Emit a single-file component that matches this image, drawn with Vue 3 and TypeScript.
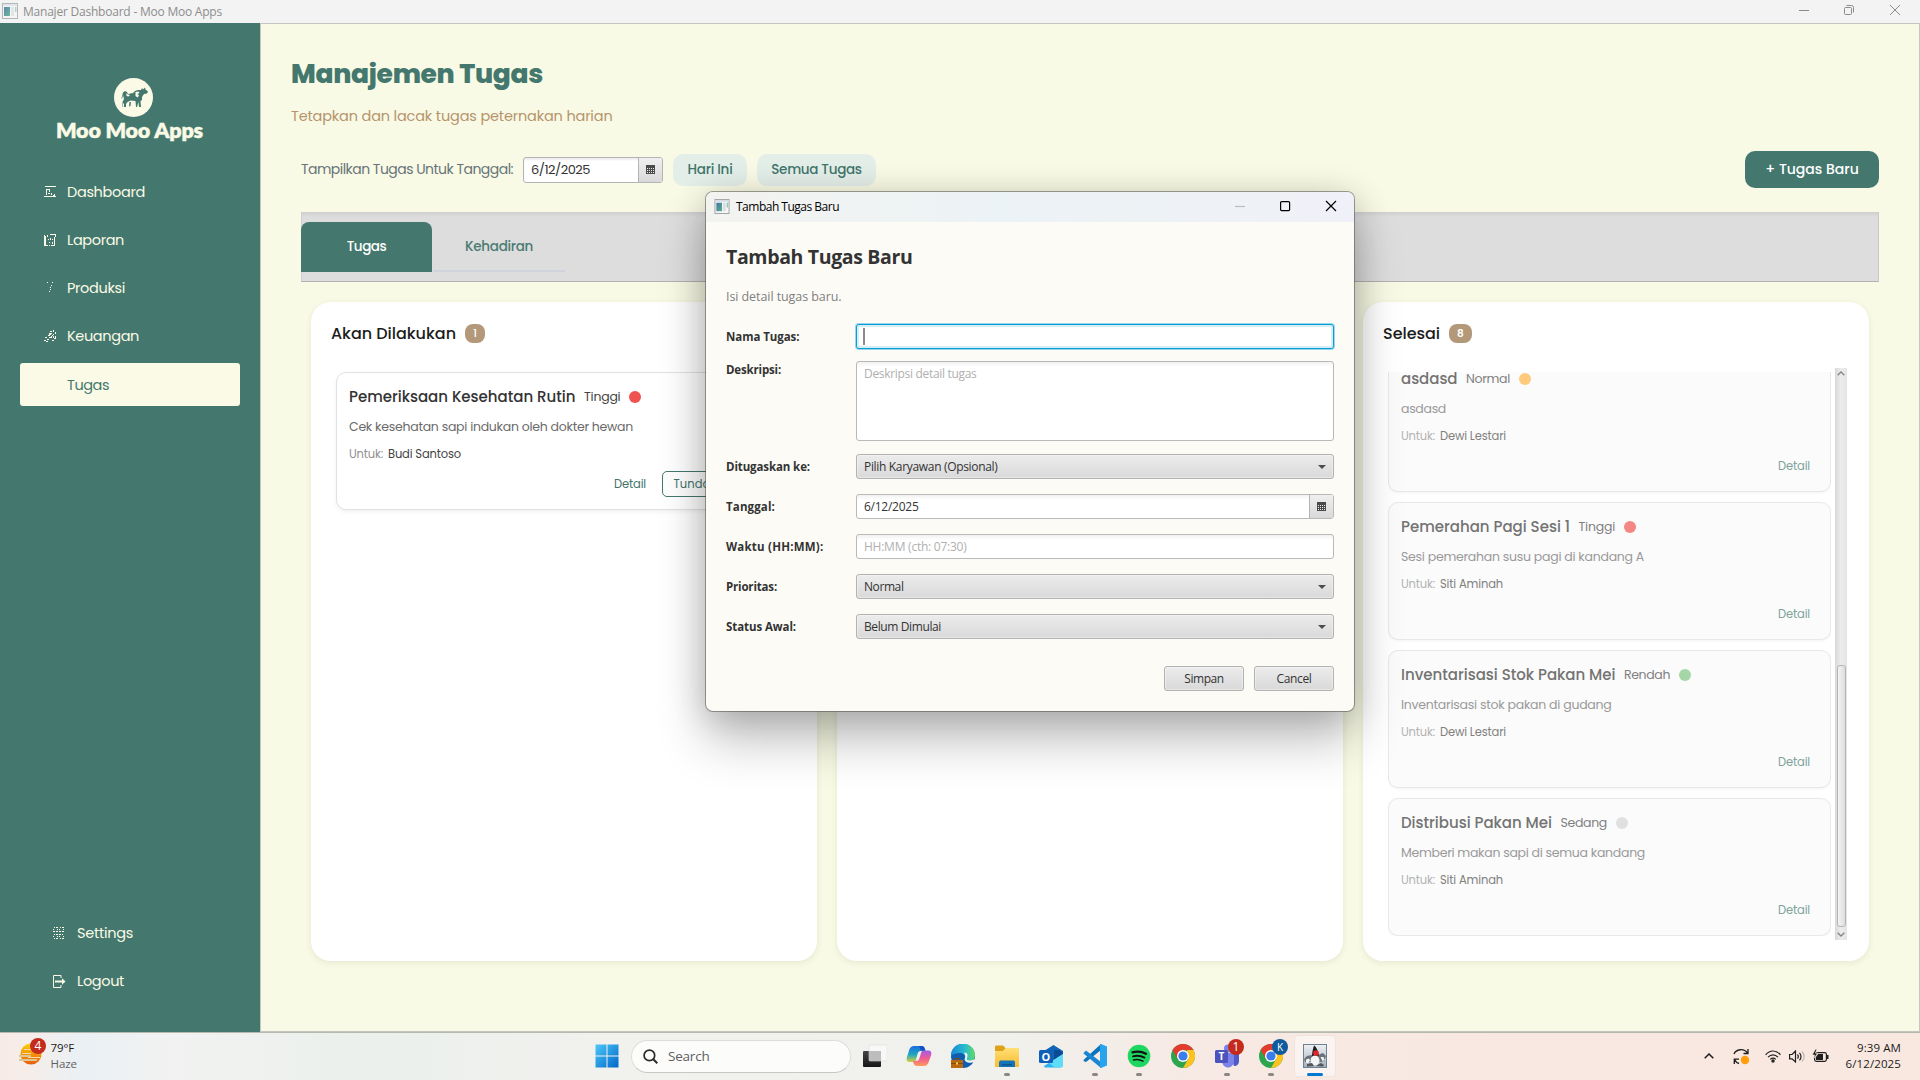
<script setup lang="ts">
interface Task {
  title: string; titleW: number; prio: string; prioW: number; color: string
  desc: string; descW: number; who: string; whoW: number
}

// Spreads the letters of a label so that it fills the given width in pixels.
const vFit = {
  mounted(el: HTMLElement, binding: { value: number }) {
    const count = (el.textContent ?? '').trim().length
    const width = el.getBoundingClientRect().width
    if (count > 1) el.style.letterSpacing = `${((binding.value - width) / count).toFixed(3)}px`
  },
}

const nav = [
  { label: 'Dashboard', w: 78, icon: 'M1 .5h11M0 10.5h12M2.500 3h3M2.500 3v6M5 4v2M4 7.500h2M7 7v2M9 9h1M10.500 8v2' },
  { label: 'Laporan', w: 57, icon: 'M.5 1v11M1.500 2v10M2 11.500h2M3 1v2M6 0v1M7 .500h5M11.500 0v3M10.500 3v8M4 5.500h1M6.500 4v2M5 8.500h1M8 8v2M5 11.500h1M7 11.500h4M8.500 5v1' },
  { label: 'Produksi', w: 58, icon: 'M3 .5h1M8 .500h1M7 3.500h1M6 5.500h1M6 7.500h1M5 9.500h1' },
  { label: 'Keuangan', w: 72, icon: 'M6 1.500h2M9 0v2M11 2v2M5 3.500h3M4 5.500l3-1M7 6.500l3-2M5 7.500h3M9 6v2M11 6v2M1 7.500h2M0 10.500h2M3 9.500h2M2 11.500h2M8 10.500h2M10 8.500h2' },
  { label: 'Tugas', w: 42, icon: '' },
]

const todo: Task = {
  title: 'Pemeriksaan Kesehatan Rutin', titleW: 226.5, prio: 'Tinggi', prioW: 36.5, color: '#ef5350',
  desc: 'Cek kesehatan sapi indukan oleh dokter hewan', descW: 284, who: 'Budi Santoso', whoW: 73,
}

const done: Task[] = [
  { title: 'asdasd', titleW: 56.5, prio: 'Normal', prioW: 44, color: '#ffca7c', desc: 'asdasd', descW: 45, who: 'Dewi Lestari', whoW: 66 },
  { title: 'Pemerahan Pagi Sesi 1', titleW: 169, prio: 'Tinggi', prioW: 36.5, color: '#f48684', desc: 'Sesi pemerahan susu pagi di kandang A', descW: 243, who: 'Siti Aminah', whoW: 63 },
  { title: 'Inventarisasi Stok Pakan Mei', titleW: 214.5, prio: 'Rendah', prioW: 46, color: '#a5d6a7', desc: 'Inventarisasi stok pakan di gudang', descW: 210.5, who: 'Dewi Lestari', whoW: 66 },
  { title: 'Distribusi Pakan Mei', titleW: 151, prio: 'Sedang', prioW: 46.5, color: '#e0e0e0', desc: 'Memberi makan sapi di semua kandang', descW: 244, who: 'Siti Aminah', whoW: 63 },
]

type Kind = 'focus' | 'area' | 'combo' | 'date' | 'text'
const fields: { label: string; lw: number; kind: Kind; value: string; vw: number }[] = [
  { label: 'Nama Tugas:', lw: 73.5, kind: 'focus', value: '', vw: 0 },
  { label: 'Deskripsi:', lw: 55, kind: 'area', value: 'Deskripsi detail tugas', vw: 112.5 },
  { label: 'Ditugaskan ke:', lw: 84, kind: 'combo', value: 'Pilih Karyawan (Opsional)', vw: 133.5 },
  { label: 'Tanggal:', lw: 49, kind: 'date', value: '6/12/2025', vw: 54.5 },
  { label: 'Waktu (HH:MM):', lw: 97.5, kind: 'text', value: 'HH:MM (cth: 07:30)', vw: 102.5 },
  { label: 'Prioritas:', lw: 51, kind: 'combo', value: 'Normal', vw: 39.5 },
  { label: 'Status Awal:', lw: 70, kind: 'combo', value: 'Belum Dimulai', vw: 77 },
]
</script>

<template>
  <div class="screen">
    <header class="titlebar">
      <svg class="win-icon" width="16" height="16" viewBox="0 0 16 16">
        <rect x=".5" y=".5" width="15" height="15" fill="#f6f6f6" stroke="#a9adb0" />
        <rect x="1" y="1" width="14" height="2" fill="#dfe5ec" />
        <rect x="2" y="4" width="6" height="9" fill="url(#wg)" /><rect x="9" y="4" width="3" height="9" fill="#e1e3e6" /><rect x="13" y="4" width="1.500" height="5" fill="#a7cfc0" />
        <defs><linearGradient id="wg" x2="1" y2="1"><stop stop-color="#3f74a8" /><stop offset="1" stop-color="#5ab089" /></linearGradient></defs>
      </svg>
      <span v-fit="199" class="win-title">Manajer Dashboard - Moo Moo Apps</span>
      <svg class="win-ctl" width="102" height="12" viewBox="0 0 102 12" fill="none" stroke="#8b8b8b" stroke-width="1">
        <path d="M0 6.500h10" /><rect x="45.500" y="3.500" width="7" height="7" rx="1" /><path d="M47.500 1.500h5a2 2 0 0 1 2 2v5" /><path d="M91 1l10 10M101 1l-10 10" />
      </svg>
    </header>

    <div class="window">
      <aside class="sidebar">
        <div class="brand">
          <svg width="39" height="39" viewBox="0 0 39 39">
            <circle cx="19.500" cy="19.500" r="19.500" fill="#fafae6" />
            <path fill="#44786e" d="M9 14.500l2-1.500 2 1 1 2 5-1 2-2 3-1 3 0 1-2 1 1.500 2-2 .5 2 2.500 2-1 2-3 .500-2 3v3l-1.500 1 .5 6h-2l-.5-5-1.500 5h-1l-.5-6-5-.500-3 1.500-1.500 2 0 3h-2l0-4-1 1 0 3H8.500v-5l1.500-3-1-4-1 4-.5-1zM15.500 24l1.500 0-.5 4-1.500.500z" />
            <path fill="#fafae6" d="M12.500 15l1.500 1.500 2 .500-1.500 1.500-2-.5zM21.500 14l3-.500 1 1.500-2 1 1.500 1.500-1.500 2-2-1.500z" />
          </svg>
          <span v-fit="147" class="brand-name">Moo Moo Apps</span>
        </div>
        <nav class="nav">
          <a v-for="n in nav" :key="n.label" class="nav-item" :class="{ active: !n.icon }">
            <svg width="13" height="13" viewBox="0 0 13 13" fill="none" stroke="#fafae6" shape-rendering="crispEdges"><path :d="n.icon" /></svg>
            <span v-fit="n.w">{{ n.label }}</span>
          </a>
        </nav>
        <nav class="nav foot">
          <a class="nav-item">
            <svg width="12" height="12" viewBox="0 0 12 12" fill="none" stroke="#fafae6" shape-rendering="crispEdges"><path d="M1 .5h1M3 .500h2M7 .500h1M9 .500h2M0 2.500h1M4 2.500h1M6 2.500h1M10 2.500h1M1 4.500h1M3 4.500h2M6 4.500h2M9 4.500h1M0 4.500h1M10 4.500h1M1 7.500h1M3 7.500h2M6 7.500h2M9 7.500h1M0 9.500h1M4 9.500h1M6 9.500h1M10 9.500h1M1 11.500h1M3 11.500h2M7 11.500h1M9 11.500h2" /></svg>
            <span v-fit="56" class="st">Settings</span>
          </a>
          <a class="nav-item">
            <svg width="13" height="13" viewBox="0 0 13 13"><path fill="none" stroke="#fafae6" d="M8 3V.5H.5v12H8V10" /><path fill="#fafae6" d="M2 5.500h7v-2.200l3.500 3.200L9 9.700V7.500H2z" /></svg>
            <span v-fit="47">Logout</span>
          </a>
        </nav>
      </aside>

      <main class="main">
        <h1 v-fit="252">Manajemen Tugas</h1>
        <p v-fit="321.500" class="sub">Tetapkan dan lacak tugas peternakan harian</p>

        <div class="filters">
          <span v-fit="212" class="flabel">Tampilkan Tugas Untuk Tanggal:</span>
          <div class="datepick">
            <div class="dp-text"><span v-fit="59">6/12/2025</span></div>
            <div class="dp-btn">
              <svg width="9" height="9" viewBox="0 0 9 9"><path fill="#4a4a4a" d="M0 0h9v9H0z" /><path stroke="#e8e8e8" stroke-width="1" stroke-dasharray="1 1" d="M1 3.500h7M1 5.500h7M1 7.500h7" /></svg>
            </div>
          </div>
          <button class="soft b1"><span v-fit="45">Hari Ini</span></button>
          <button class="soft b2"><span v-fit="90.500">Semua Tugas</span></button>
          <button class="new"><span v-fit="93.500">+ Tugas Baru</span></button>
        </div>

        <div class="tabs">
          <div class="tab on"><span v-fit="39.500">Tugas</span></div>
          <div class="tab"><span v-fit="68">Kehadiran</span></div>
        </div>

        <div class="board">
          <section class="col">
            <div class="col-head"><span v-fit="125">Akan Dilakukan</span><b class="n1">1</b></div>
            <div class="view">
              <article class="card">
                <div class="c-title"><span v-fit="todo.titleW" class="t">{{ todo.title }}</span><span v-fit="todo.prioW" class="p">{{ todo.prio }}</span><i :style="{ background: todo.color }" /></div>
                <div class="c-desc"><span v-fit="todo.descW">{{ todo.desc }}</span></div>
                <div class="c-who"><span v-fit="34" class="u">Untuk:</span><span v-fit="todo.whoW" class="w">{{ todo.who }}</span></div>
                <div class="c-act start"><span v-fit="32">Detail</span><button class="tunda"><span v-fit="37">Tunda</span></button></div>
              </article>
            </div>
          </section>
          <section class="col" />
          <section class="col">
            <div class="col-head"><span v-fit="57">Selesai</span><b>8</b></div>
            <div class="scroll">
              <div class="view scrolled">
                <article v-for="t in done" :key="t.title" class="card faded">
                  <div class="c-title"><span v-fit="t.titleW" class="t">{{ t.title }}</span><span v-fit="t.prioW" class="p">{{ t.prio }}</span><i :style="{ background: t.color }" /></div>
                  <div class="c-desc"><span v-fit="t.descW">{{ t.desc }}</span></div>
                  <div class="c-who"><span v-fit="34" class="u">Untuk:</span><span v-fit="t.whoW" class="w">{{ t.who }}</span></div>
                  <div class="c-act"><span v-fit="32">Detail</span></div>
                </article>
              </div>
              <div class="sbar">
                <svg width="8" height="5" viewBox="0 0 8 5" fill="none" stroke="#858585" stroke-width="1.300"><path d="M.7 4.300L4 1l3.300 3.300" /></svg>
                <div class="thumb" />
                <svg width="8" height="5" viewBox="0 0 8 5" fill="none" stroke="#858585" stroke-width="1.300"><path d="M.7.700L4 4 7.300.700" /></svg>
              </div>
            </div>
          </section>
        </div>
      </main>
    </div>

    <div class="dialog">
      <div class="d-bar">
        <svg width="16" height="15" viewBox="0 0 16 16">
          <rect x=".5" y=".5" width="15" height="15" fill="#f6f6f6" stroke="#9ca1a5" />
          <rect x="1" y="1" width="14" height="2" fill="#d5dde6" />
          <rect x="2" y="4" width="6" height="9" fill="url(#wg)" /><rect x="9" y="4" width="3" height="9" fill="#dbdee2" /><rect x="13" y="4" width="1.500" height="5" fill="#8cc7b0" />
        </svg>
        <span v-fit="103">Tambah Tugas Baru</span>
        <svg class="d-ctl" width="102" height="12" viewBox="0 0 102 12" fill="none" stroke="#000" stroke-width="1.200">
          <path d="M0 6.500h10" stroke="#b9bdbf" /><rect x="45.600" y="1.600" width="9" height="9" rx="1" /><path d="M91 1l10 10M101 1l-10 10" />
        </svg>
      </div>
      <h2 v-fit="186.500">Tambah Tugas Baru</h2>
      <p v-fit="115.500" class="d-sub">Isi detail tugas baru.</p>
      <div class="form">
        <div v-for="f in fields" :key="f.label" class="row" :class="f.kind">
          <label><span v-fit="f.lw">{{ f.label }}</span></label>
          <div class="field">
            <span v-if="f.value" v-fit="f.vw">{{ f.value }}</span>
            <em v-else class="caret" />
            <svg v-if="f.kind === 'combo'" class="arrow" width="8" height="4" viewBox="0 0 8 4"><path fill="#4d4d4d" d="M0 0h8L4 4z" /></svg>
            <div v-if="f.kind === 'date'" class="dp-btn">
              <svg width="9" height="9" viewBox="0 0 9 9"><path fill="#4a4a4a" d="M0 0h9v9H0z" /><path stroke="#e8e8e8" stroke-width="1" stroke-dasharray="1 1" d="M1 3.500h7M1 5.500h7M1 7.500h7" /></svg>
            </div>
          </div>
        </div>
      </div>
      <div class="d-actions">
        <button><span v-fit="39.500">Simpan</span></button>
        <button><span v-fit="35">Cancel</span></button>
      </div>
    </div>

    <footer class="taskbar">
      <div class="weather">
        <svg width="30" height="30" viewBox="0 0 30 30">
          <defs><linearGradient id="sun" x2="0" y2="1"><stop stop-color="#fbd10a" /><stop offset="1" stop-color="#ea5b0c" /></linearGradient></defs>
          <circle cx="13" cy="17" r="10.500" fill="url(#sun)" />
          <path d="M6 12.500h17M4 16.500h9M10 20.500h12" stroke="#f6d9a0" stroke-width="1" /><path d="M1 19h12M1 23h18" stroke="#dcc691" stroke-width="2" />
          <circle cx="20" cy="9" r="8" fill="#c42b1c" /><text x="20" y="13.100" text-anchor="middle" font-size="12" fill="#fff" font-family="Open Sans, sans-serif">4</text>
        </svg>
        <div class="w-text"><span v-fit="23.500">79°F</span><span v-fit="26.500" class="g">Haze</span></div>
      </div>
      <div class="dock">
        <svg class="start" width="24" height="24" viewBox="0 0 24 24"><defs><linearGradient id="ws" x2="1" y2="1"><stop stop-color="#4cc8fa" /><stop offset="1" stop-color="#0067c8" /></linearGradient></defs><path fill="url(#ws)" d="M.5.500h11v11H.500zM12.500.500h11v11h-11zM.500 12.500h11v11H.500zM12.500 12.500h11v11h-11z" /></svg>
        <div class="search">
          <svg width="15" height="15" viewBox="0 0 15 15" fill="none" stroke="#2a2a2a" stroke-width="1.700"><circle cx="6.400" cy="6.400" r="5.300" /><path d="M10.300 10.300l4 4" stroke-width="2" /></svg>
          <span v-fit="41.500">Search</span>
        </div>
        <div class="app">
          <svg width="24" height="24" viewBox="0 0 24 24"><defs><linearGradient id="tv" x2="0" y2="1"><stop stop-color="#444" /><stop offset="1" stop-color="#161616" /></linearGradient></defs><rect x="0" y="7" width="18" height="16" rx="1" fill="url(#tv)" /><rect x="6" y="1" width="18" height="16" rx="1" fill="#f8f8f8" stroke="#dcdcdc" stroke-width=".6" /><path fill="#bdbdbd" d="M6 7h12v10H6z" /></svg>
        </div>
        <div class="app">
          <svg width="26" height="24" viewBox="0 0 26 24">
            <defs><linearGradient id="c1" x2="0" y2="1"><stop stop-color="#1a6be0" /><stop offset=".55" stop-color="#22a8c0" /><stop offset="1" stop-color="#d9d13a" /></linearGradient><linearGradient id="c2" x2="0" y2="1"><stop stop-color="#a45be8" /><stop offset=".5" stop-color="#ee5b94" /><stop offset="1" stop-color="#ff9a5a" /></linearGradient></defs>
            <path fill="url(#c1)" d="M8 2h7c2 0 3 1 3.500 3l.5 2h-4c-2 0-3 1-3.500 3l-1.500 6c-.5 1.500-1.500 2-3 2H4c-3 0-4-2-3-5l2.500-8C4.500 3 6 2 8 2z" />
            <path fill="url(#c2)" d="M18 22h-7c-2 0-3-1-3.500-3L7 17h3c2 0 3-1 3.500-3L15 9c.5-2 1.500-2.500 3-2.500h4c3 0 4 2 3 5l-2.500 7c-1 2.500-2.500 3.500-4.500 3.500z" />
            <path fill="#1451c4" d="M13 2h3c1.500 0 2.500 1 3 3l.6 1.600H15z" />
          </svg>
        </div>
        <div class="app">
          <svg width="24" height="24" viewBox="0 0 24 24">
            <defs><linearGradient id="e1" x2="1"><stop stop-color="#1688d8" /><stop offset=".6" stop-color="#2cbccd" /><stop offset="1" stop-color="#63dc62" /></linearGradient></defs>
            <circle cx="12" cy="12" r="12" fill="#0f5fae" /><path fill="url(#e1)" d="M0 12A12 12 0 0 1 24 11c0 5-4 7-8 6-2-.5-3-1.500-2-3 1-2-1-5-5-5-5 0-8 2-9 3z" /><path fill="#f2f4f1" d="M14 14c1-3-1-5-1-5 4-1 4 3 3 5s1 4 8 1l-1 3c-4 2-11 0-9-4z" />
            <path fill="#b8690f" d="M0 16h12v8H0z" /><path fill="#8a4a07" d="M0 19h12v1H0z" /><path fill="none" stroke="#8a4a07" d="M4 16v-1.500h4V16" /><path fill="#ffd25e" d="M5 18.500h2v2H5z" />
          </svg>
        </div>
        <div class="app run">
          <svg width="24" height="24" viewBox="0 0 24 24"><defs><linearGradient id="f1" x2="0" y2="1"><stop stop-color="#ffdf77" /><stop offset="1" stop-color="#f8bd2e" /></linearGradient></defs><path fill="#dfa01a" d="M0 3c0-1 .5-1.500 1.500-1.500H8L10.500 4H22v5H0z" /><path fill="url(#f1)" d="M0 7h8l2.500-3H23c.6 0 1 .4 1 1v17c0 .6-.4 1-1 1H1c-.6 0-1-.4-1-1z" /><path fill="#1673b8" d="M4 23v-4.500C4 17 5 16.500 6 16.500h12c1 0 2 .5 2 2V23z" /><path fill="#0d5692" d="M7 20h10v1.500H7z" /></svg>
        </div>
        <div class="app">
          <svg width="24" height="24" viewBox="0 0 24 24"><path fill="#1066b5" d="M5 7l9.500-6L24 7v9H5z" /><path fill="#0a4b94" d="M15 6l5 0 4 3v3l-9 5z" /><path fill="#2bb4f0" d="M5 22l19-12v11c0 1.500-1 2.500-2.500 2.500H7.500C6 23.500 5 23 5 22z" /><path fill="#5fdcf8" d="M24 10v11c0 1.500-1 2.500-2.500 2.500h-6L10 19z" /><rect y="6" width="14" height="13" rx="1.500" fill="#0f5fb8" /><text x="7" y="16.500" text-anchor="middle" font-size="11" font-weight="700" fill="#fff" font-family="Open Sans, sans-serif">O</text></svg>
        </div>
        <div class="app run">
          <svg width="24" height="24" viewBox="0 0 24 24"><path fill="#0a74bd" d="M1 15.500L18 0v6L3 18 .500 17z" /><path fill="#1a87d2" d="M1 8.500L3 6.500 18 18v6L.500 9.500z" /><path fill="#28a4ec" d="M18 0l6 2.500v19L18 24c-1 0-1-.5-1-1V1c0-.5 0-1 1-1z" /></svg>
        </div>
        <div class="app run">
          <svg width="24" height="24" viewBox="0 0 24 24"><circle cx="12" cy="12" r="11.300" fill="#1ed760" /><path fill="none" stroke="#111" stroke-linecap="round" stroke-width="2.300" d="M5.500 8.300c4.500-1.300 9.500-.8 13.500 1.500" /><path fill="none" stroke="#111" stroke-linecap="round" stroke-width="1.900" d="M6 12.300c4-1.100 8-.6 11.500 1.300" /><path fill="none" stroke="#111" stroke-linecap="round" stroke-width="1.500" d="M6.500 15.900c3.400-.8 6.500-.4 9.500 1.200" /></svg>
        </div>
        <div class="app">
          <svg width="24" height="24" viewBox="0 0 24 24"><circle cx="12" cy="12" r="12" fill="#2da44e" /><path fill="#e33b2e" d="M1.600 6A12 12 0 0 1 22.400 6L12 6.500 6.800 15z" /><path fill="#fcc31e" d="M22.400 6A12 12 0 0 1 12 24l5.200-9L16 6z" /><circle cx="12" cy="12" r="6" fill="#fff" /><circle cx="12" cy="12" r="4.600" fill="#3b7ded" /></svg>
        </div>
        <div class="app run">
          <svg width="24" height="24" viewBox="0 0 24 24"><circle cx="20" cy="8" r="3" fill="#5059c9" /><circle cx="13" cy="4.500" r="4" fill="#7b83eb" /><path fill="#5059c9" d="M15 10h9v7c0 3-2 5-5 5z" /><path fill="#7b83eb" d="M7 9h12v8c0 4-3 6.500-6 6.500S7 21 7 17z" /><rect y="6" width="13" height="13" rx="1.500" fill="#4b53bc" /><text x="6.500" y="16" text-anchor="middle" font-size="10" font-weight="700" fill="#fff" font-family="Open Sans, sans-serif">T</text></svg>
          <span class="bub red">1</span>
        </div>
        <div class="app run">
          <svg width="24" height="24" viewBox="0 0 24 24"><circle cx="12" cy="12" r="12" fill="#2da44e" /><path fill="#e33b2e" d="M1.600 6A12 12 0 0 1 22.400 6L12 6.500 6.800 15z" /><path fill="#fcc31e" d="M22.400 6A12 12 0 0 1 12 24l5.200-9L16 6z" /><circle cx="12" cy="12" r="6" fill="#fff" /><circle cx="12" cy="12" r="4.600" fill="#3b7ded" /></svg>
          <span class="bub blue">K</span>
        </div>
        <div class="app current">
          <svg width="24" height="24" viewBox="0 0 24 24">
            <defs><linearGradient id="dk" x2="0" y2="1"><stop stop-color="#eef1f4" /><stop offset="1" stop-color="#9fb0be" /></linearGradient></defs>
            <rect x=".5" y=".5" width="23" height="23" fill="url(#dk)" stroke="#6f8292" />
            <path fill="#6a7178" d="M1 15l3-3 5-1 6 0 5-2 3 3-2 5-4 1H6l-4 0z" /><path fill="#1c1c1c" d="M11 1.500c2 1 4 5 5 10l-7 1c0-4 1-8 2-11z" />
            <ellipse cx="12" cy="16.500" rx="4.500" ry="5" fill="#f4f4f4" /><path fill="#f4f4f4" d="M3 15.500l3-1 1 2-2 3-2-1zM17.500 13l3 0 1 3-2 1z" />
            <path fill="#555" d="M4 20l5-1 2 3-7 .5zM13 22l5-3 3 2-1 1.500z" /><circle cx="13" cy="9" r="2.800" fill="#e5232a" />
          </svg>
        </div>
      </div>
      <div class="tray">
        <svg width="10" height="6" viewBox="0 0 10 6" fill="none" stroke="#1f1f1f" stroke-width="1.500"><path d="M.7 5.300L5 1l4.300 4.300" /></svg>
        <svg class="sync" width="17" height="17" viewBox="0 0 17 17" fill="none" stroke="#1f1f1f" stroke-width="1.300"><path d="M1 6C3 1 11 0 14.500 5M15 1v4.500h-4.500M6 15.500C4 15 2.500 13.500 1.500 11.500M1.300 16v-4.800H6" /><circle cx="12" cy="12" r="4.200" fill="#ff9d0a" stroke="none" /></svg>
        <svg class="wifi" width="16" height="13" viewBox="0 0 16 13" fill="none" stroke="#1f1f1f" stroke-width="1.200"><path d="M.6 4.800C5-.3 11-.3 15.400 4.800M3 7.200c3-3.200 7-3.200 10 0M5.300 9.400c1.600-1.700 3.800-1.700 5.400 0" /><circle cx="8" cy="11" r="1.100" fill="#1f1f1f" /></svg>
        <svg class="vol" width="16" height="13" viewBox="0 0 16 13" fill="none" stroke="#1f1f1f" stroke-width="1.200"><path d="M.6 4.500h2.500L6.500 1v11L3.100 8.800H.6zM8.500 4.500c1 1.200 1 2.800 0 4M10.500 2.800c2 2 2 5.500 0 7.500" /><path d="M13 1.500c2.600 3 2.600 7 0 10" stroke="#c3b8b3" /></svg>
        <svg class="bat" width="17" height="14" viewBox="0 0 17 14"><rect x="2.600" y="3.600" width="11.800" height="8.800" rx="1.800" fill="none" stroke="#1f1f1f" stroke-width="1.200" /><path fill="#1f1f1f" d="M15 6h1.500v4H15zM6 5h5v6H4V8z" /><path fill="#1f1f1f" stroke="#f9e8e1" stroke-width=".8" d="M3.500 0L0 6h2.500L1.500 9.500 6 4.200H3.500L5 0z" /></svg>
        <div class="clock"><span v-fit="44">9:39 AM</span><span v-fit="55.500">6/12/2025</span></div>
      </div>
    </footer>
  </div>
</template>

<style>
body { margin: 0; overflow: hidden; }
</style>

<style scoped>
* { box-sizing: border-box; }
.screen {
  position: relative; width: 1920px; height: 1080px; overflow: hidden; display: flex; flex-direction: column;
  font-family: Poppins, Inter, sans-serif; --seg: "Segoe UI", "Open Sans", "Noto Sans", sans-serif; --green: #44786e;
}
.screen svg { flex: none; display: block; }
span, h1, h2, p { white-space: nowrap; }
h1, h2, p { margin: 0; align-self: flex-start; }
span { display: inline-block; }
button { border: 0; padding: 0; font-family: inherit; display: flex; align-items: center; justify-content: center; }

.titlebar { height: 23px; flex: none; background: #f3f3f3; display: flex; align-items: center; padding: 0 19px 0 2px; }
.win-icon { opacity: .85; margin-top: -2px; }
.win-title { margin-left: 5px; font: 12px/16px var(--seg); color: #8d8d8d; }
.win-ctl { margin: -3px 0 0 auto; }

.window { height: 1010px; flex: none; display: flex; background: #f8fae5; border-bottom: 1px solid #b5b9b0; }
.sidebar { width: 260px; flex: none; background: var(--green); display: flex; flex-direction: column; padding: 55px 0 29px; }
.brand { display: flex; flex-direction: column; align-items: center; padding-left: 7px; }
.brand-name { font: 800 21.500px/26px Lato, sans-serif; color: #fafae6; margin: 0 8px 0 0; -webkit-text-stroke: .4px #fafae6; }
.nav { display: flex; flex-direction: column; gap: 5px; padding: 0 20px; margin-top: 28px; }
.nav-item { height: 43px; display: flex; align-items: center; gap: 10px; padding: 0 0 1px 24px; font-size: 14.500px; line-height: 20px; color: #fafae6; border-radius: 3px; }
.nav-item.active { background: #fafae6; color: var(--green); padding-bottom: 0; }
.nav.foot { margin-top: auto; }
.foot .nav-item { padding-left: 33px; gap: 11px; }
.foot .st { margin-left: 1px; }

.main { flex: 1; border: 1px solid #c4c6c0; padding: 0 40px 0 30px; display: flex; flex-direction: column; }
h1 { font-size: 26.500px; line-height: 36px; font-weight: 800; color: var(--green); margin-top: 31.500px; }
.sub { font-size: 14.500px; line-height: 22px; color: #b6946c; margin-top: 13.500px; }
.filters { display: flex; align-items: center; margin: 24px 0 0 10px; height: 37px; }
.flabel { font-size: 14px; color: #69747a; margin-right: 10px; }
.datepick { width: 140px; height: 26px; display: flex; border: 1px solid #b4b4b4; border-radius: 3px; background: #fff; overflow: hidden; box-shadow: inset 0 2px 2px #eee; }
.dp-text { flex: 1; padding-left: 7px; font-size: 13px; line-height: 24px; color: #333; }
.dp-btn { width: 24px; border-left: 1px solid #b4b4b4; background: linear-gradient(#efefef, #d9d9d9); display: flex; align-items: center; justify-content: center; }
.soft { height: 32px; border-radius: 10px; background: #e4eee9; color: #3f756b; font-size: 13.500px; font-weight: 500; margin-left: 10px; }
.b1 { width: 74px; } .b2 { width: 119px; }
.new { width: 134px; height: 37px; margin-left: auto; border-radius: 10px; background: var(--green); color: #fff; font-size: 14px; font-weight: 500; }
.tabs { margin: 24px 0 0 10px; height: 70px; padding-top: 10px; display: flex; background: linear-gradient(#cfcfcf, #ddd 5px); border: solid #c8c8c8; border-width: 0 1px 1px 0; border-bottom-color: #b2b2b2; box-shadow: inset 1px 0 #cfcfcf; }
.tab { width: 132px; height: 50px; padding-top: 2px; display: flex; align-items: center; justify-content: center; font-size: 13.500px; font-weight: 500; color: #4a7b72; border-bottom: 2px solid #d0d3dc; }
.tab.on { background: var(--green); color: #fff; border-color: var(--green); border-radius: 8px 8px 0 0; width: 131px; margin-right: 1px; }

.board { display: flex; gap: 20px; margin: 20px 0 0 20px; width: 1558px; }
.col { width: 506px; flex: none; height: 659px; background: #fff; border-radius: 20px; box-shadow: 0 2px 6px rgba(60, 60, 20, .09); padding: 20px; }
.col-head { height: 22px; display: flex; align-items: center; font-size: 16px; font-weight: 500; color: #1c1c1c; }
.col-head b { margin-left: 9px; width: 23px; height: 19px; line-height: 19px; border-radius: 8px; background: #b3997a; color: #fff; text-align: center; font-size: 10.500px; font-weight: 600; }
.col-head b.n1 { width: 20px; font-weight: 500; }
.view { margin: 28px 0 0 5px; }
.scroll { display: flex; height: 572px; margin-top: 24px; }
.view.scrolled { margin: 4px 0 4px 5px; width: 443px; height: 564px; overflow: hidden; display: flex; flex-direction: column; gap: 10px; justify-content: flex-end; }
.card { height: 138px; flex: none; border: 1px solid #e2e2e2; border-radius: 10px; padding: 12px 20px 0 12px; box-shadow: 0 2px 4px rgba(0, 0, 0, .06); background: #fff; }
.card.faded { background: #fbfbfb; border-color: #e8e8e8; box-shadow: 0 1px 3px rgba(0, 0, 0, .05); }
.c-title { display: flex; align-items: center; height: 24px; }
.t { font-size: 15px; font-weight: 500; color: #333; line-height: 20px; margin-top: -1px; }
.p { font-size: 12.500px; color: #444; margin: 0 9px 0 8.500px; }
.c-title i { width: 12px; height: 12px; border-radius: 50%; }
.c-desc { font-size: 12.500px; line-height: 20px; height: 20px; margin-top: 8px; color: #6a6a6a; }
.c-who { font-size: 11.500px; line-height: 20px; height: 18px; margin-top: 7px; display: flex; gap: 5px; }
.u { color: #919191; } .w { color: #444; }
.c-act { margin-top: 9px; height: 26px; display: flex; align-items: center; justify-content: flex-end; font-size: 11.500px; line-height: 18px; color: #3f756b; }
.c-act.start { justify-content: flex-start; padding-left: 265px; gap: 16px; }
.tunda { width: 60px; height: 26px; border: 1px solid #44786e; border-radius: 5px; color: #3f756b; background: #fff; font-size: 11.500px; padding-top: 1px; }
.faded .t { color: #737373; } .faded .p { color: #808080; } .faded .c-desc { color: #999; }
.faded .u { color: #b3b3b3; } .faded .w { color: #808080; } .faded .c-act { color: #7ea39c; }
.sbar { width: 12px; margin-left: 4px; background: linear-gradient(90deg, #d9d9d9, #ececec 50%, #e4e4e4); display: flex; flex-direction: column; align-items: center; padding: 3px 0 3px; }
.sbar .thumb { width: 9px; height: 262px; margin: auto 0 5px; border: 1px solid #b5b5b5; border-radius: 3px; background: linear-gradient(90deg, #f3f3f3, #dedede); }

.dialog {
  position: absolute; left: 706px; top: 192px; width: 648px; height: 519px; border-radius: 7px; background: #fcfbf6; font-family: var(--seg);
  box-shadow: 0 0 0 1px rgba(70, 70, 65, .5), 0 30px 50px rgba(0, 0, 0, .24), 0 4px 34px rgba(0, 0, 0, .19);
  display: flex; flex-direction: column; padding-bottom: 20px;
}
.d-bar { height: 30px; display: flex; align-items: center; padding: 0 17px 0 8px; border-radius: 7px 7px 0 0; background: linear-gradient(90deg, #f3f3f0, #ecf3f6 45%, #edf2f5 65%, #f0f1f8); font-size: 12px; color: #000; }
.d-bar svg:first-child { margin-top: -2px; }
.d-bar span { margin: -2px 0 0 6px; }
.d-ctl { margin: -2px 0 0 auto; }
h2 { font-size: 19.500px; line-height: 28px; color: #333; margin: 21px 0 0 20px; }
.d-sub { font-size: 12.500px; line-height: 18px; color: #808080; margin: 17px 0 0 20px; }
.form { padding: 18px 20px 0; display: flex; flex-direction: column; gap: 15px; }
.row { display: flex; height: 25px; }
.row.focus { margin-bottom: -3px; } .row.area { height: 80px; margin-bottom: -2px; }
label { width: 130px; font-size: 11.500px; font-weight: 700; line-height: 25px; color: #333; }
.area label { line-height: 17px; }
.field { flex: 1; height: 25px; border: 1px solid #b9b9b9; border-radius: 3px; background: linear-gradient(#f1f1f1, #fff 5px); display: flex; align-items: center; padding-left: 7px; font-size: 12px; color: #333; }
.combo .field, .d-actions button { background: linear-gradient(#ececec, #d9d9d9); border: 1px solid #b2b2b2; box-shadow: inset 0 0 0 1px rgba(255, 255, 255, .35); }
.text .field, .area .field { color: #b0b0b0; }
.area .field { height: 80px; align-items: flex-start; padding-top: 4px; line-height: 16px; }
.focus .field { border-color: #039ed3; box-shadow: 0 0 0 1px #9bd5ec, inset 0 0 0 2px #d8eef7; background: #fff; padding-left: 6px; }
.date .dp-btn { margin-left: auto; height: 23px; }
.caret { width: 1.500px; height: 17px; background: #8c8c8c; }
.arrow { margin: 0 7px 0 auto; }
.d-actions { display: flex; justify-content: flex-end; gap: 10px; margin: auto 20px 0; }
.d-actions button { width: 80px; height: 25px; border-radius: 3px; font-size: 12px; color: #333; }

.taskbar { flex: none; height: 47px; display: flex; position: relative; font-family: var(--seg); background: linear-gradient(90deg, #f8ebe5 0, #f6ede9 25px, #eaf0f4 80px, #f1f2f1 170px, #ebf0ec 370px, #f1f1ee 600px, #f0f1ed 1000px, #f7e9e3 1200px, #f8e8e1 1500px, #f9e8e0); }
.weather { width: 595px; padding-left: 18px; display: flex; }
.weather svg { margin-top: 4px; }
.w-text, .clock { display: flex; flex-direction: column; font-size: 11.500px; line-height: 16px; padding-top: 7px; color: #1c1c1c; }
.w-text { margin-left: 2.500px; align-items: flex-start; }
.w-text .g { color: #5f6162; }
.dock { display: flex; align-items: center; height: 46px; }
.search { width: 220px; height: 33px; margin: 0 5px 0 12px; border-radius: 17px; background: #fcfcfb; border: 1px solid #dcdedb; border-bottom-color: #c6c8c5; display: flex; align-items: center; padding-left: 11px; gap: 10px; font-size: 13.500px; color: #5e5e5e; }
.search span { margin-top: -1px; }
.app { width: 40px; height: 40px; margin-right: 4px; display: flex; align-items: center; justify-content: center; position: relative; border-radius: 4px; }
.app:nth-child(3) { margin-left: -1px; }
.app.run::after { content: ''; position: absolute; left: 17px; bottom: 0; width: 6px; height: 3px; border-radius: 2px; background: #8a8684; }
.app.current { background: #fbf3ef; box-shadow: 0 0 0 1px #f0e4de; }
.app.current::after { content: ''; position: absolute; left: 12px; bottom: 0; width: 16px; height: 3px; border-radius: 2px; background: #0078d4; }
.bub { position: absolute; left: 21px; top: 3px; width: 16px; height: 16px; border-radius: 50%; color: #fff; font-size: 12px; line-height: 16px; text-align: center; }
.red { background: #c42b1c; } .blue { background: #0e5a9c; font-size: 10px; }
.tray { margin-left: auto; display: flex; align-items: center; height: 46px; padding-right: 19px; }
.sync { margin-left: 19px; } .wifi { margin-left: 15px; } .vol { margin-left: 8px; } .bat { margin-left: 7px; margin-right: 1px; }
.clock { align-items: flex-end; width: 71px; height: 46px; }
</style>
